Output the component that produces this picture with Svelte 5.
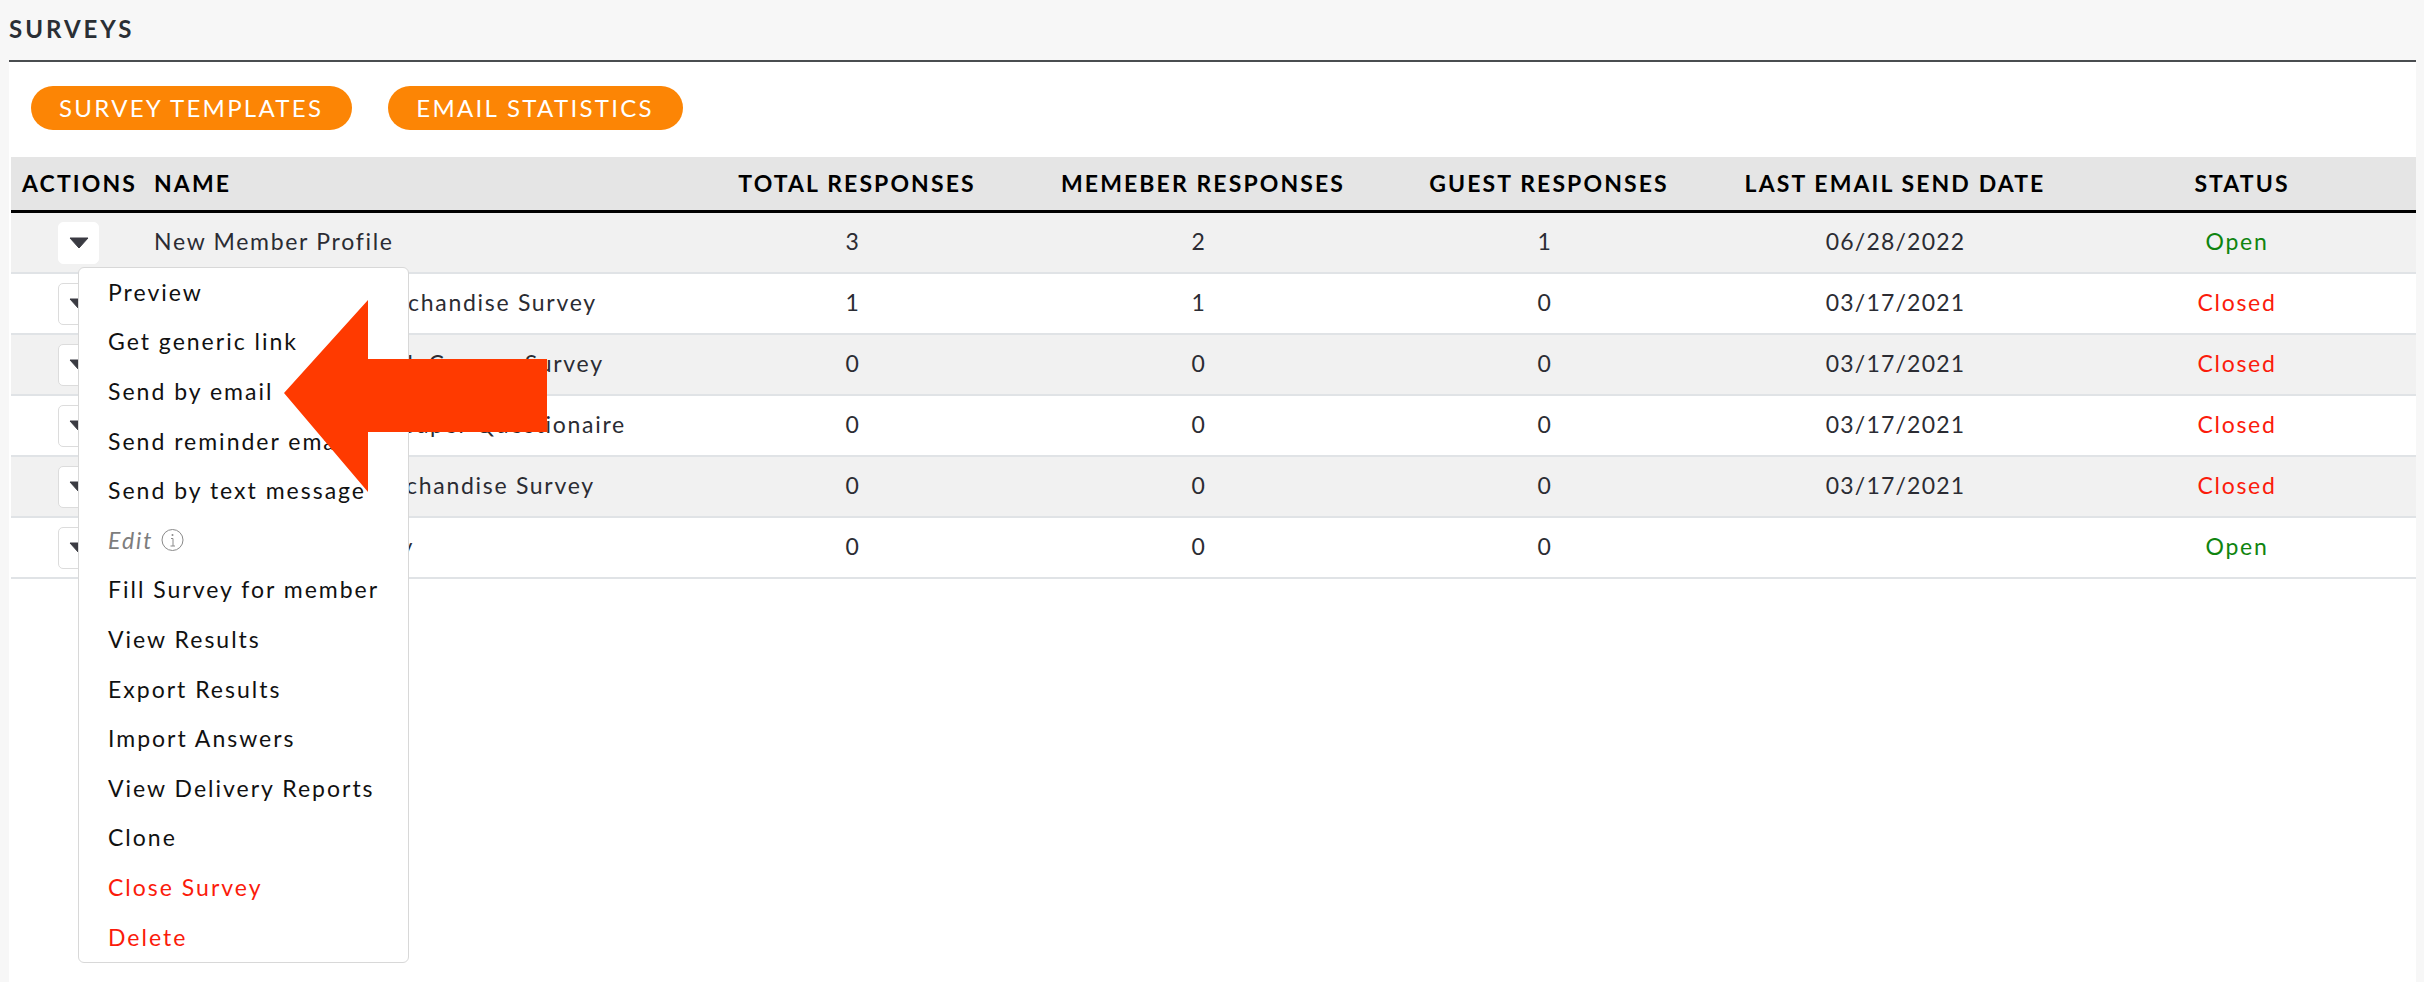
<script>
  const rows = [
    { name: "New Member Profile", total: 3, member: 2, guest: 1, date: "06/28/2022", status: "Open" },
    { name: "Spring & Summer Merchandise Survey", total: 1, member: 1, guest: 0, date: "03/17/2021", status: "Closed" },
    { name: "Lakeview Summer Park Camper Survey", total: 0, member: 0, guest: 0, date: "03/17/2021", status: "Closed" },
    { name: "Big Community Newspaper Questionaire", total: 0, member: 0, guest: 0, date: "03/17/2021", status: "Closed" },
    { name: "Autumn & Spring Merchandise Survey", total: 0, member: 0, guest: 0, date: "03/17/2021", status: "Closed" },
    { name: "Yearly Member Survey", total: 0, member: 0, guest: 0, date: "", status: "Open" }
  ];

  const menu = [
    { label: "Preview" },
    { label: "Get generic link" },
    { label: "Send by email" },
    { label: "Send reminder email" },
    { label: "Send by text message" },
    { label: "Edit", disabled: true },
    { label: "Fill Survey for member" },
    { label: "View Results" },
    { label: "Export Results" },
    { label: "Import Answers" },
    { label: "View Delivery Reports" },
    { label: "Clone" },
    { label: "Close Survey", danger: true },
    { label: "Delete", danger: true }
  ];
</script>

<main>
  <h1>Surveys</h1>
  <section class="panel">
    <div class="buttons">
      <button class="pill">Survey Templates</button>
      <button class="pill">Email Statistics</button>
    </div>

    <div class="table-wrap">
      <table>
        <colgroup>
          <col class="c-actions" />
          <col class="c-name" />
          <col class="c-num" />
          <col class="c-num" />
          <col class="c-num" />
          <col class="c-num" />
          <col />
        </colgroup>
        <thead>
          <tr>
            <th class="left actions-head">Actions</th>
            <th class="left">Name</th>
            <th>Total Responses</th>
            <th>Memeber Responses</th>
            <th>Guest Responses</th>
            <th>Last Email Send Date</th>
            <th class="status-head">Status</th>
          </tr>
        </thead>
        <tbody>
          {#each rows as row, i}
            <tr class:odd={i % 2 === 0}>
              <td class="action-cell">
                <button class="caret" class:first={i === 0} aria-label="Actions">
                  <svg width="20" height="12" viewBox="0 0 20 12">
                    <path d="M1 1h18L10 11z" fill="#3a3b42" stroke="#3a3b42" stroke-width="1" stroke-linejoin="round" />
                  </svg>
                </button>
              </td>
              <td class="name">{row.name}</td>
              <td>{row.total}</td>
              <td>{row.member}</td>
              <td>{row.guest}</td>
              <td class="date">{row.date}</td>
              <td class={row.status === "Open" ? "open" : "closed"}>{row.status}</td>
            </tr>
          {/each}
        </tbody>
      </table>

      <ul class="menu">
        {#each menu as item}
          <li class:danger={item.danger} class:disabled={item.disabled}>
            {item.label}
            {#if item.disabled}
              <svg class="info" width="23" height="24" viewBox="0 0 23 24">
                <circle cx="11.5" cy="12" r="10.5" fill="none" stroke="#8a8a8a" stroke-width="1" />
                <circle cx="11.5" cy="7" r="1" fill="#8a8a8a" />
                <path d="M10 10.5h2v7.5M9.5 18h4.5" fill="none" stroke="#8a8a8a" stroke-width="1" />
              </svg>
            {/if}
          </li>
        {/each}
      </ul>

      <svg class="arrow" width="264" height="192" viewBox="0 0 264 192">
        <path d="M0 93 84 0V59H263V132H84V192z" fill="#ff3a00" />
      </svg>
    </div>
  </section>
</main>

<style>
  :global(body) {
    margin: 0;
    background-color: #f7f7f7;
    font-family: Lato, "Open Sans", sans-serif;
    color: #2b2c33;
  }

  main {
    padding: 0 8px 0 9px;
  }

  h1 {
    margin: 0;
    height: 60px;
    line-height: 58px;
    font-size: 24px;
    font-weight: 700;
    letter-spacing: 3px;
    text-transform: uppercase;
    color: #2a2f35;
    border-bottom: 2px solid #4a4d50;
  }

  .panel {
    background-color: #fff;
    min-height: 920px;
    padding-left: 2px;
  }

  .buttons {
    display: flex;
    gap: 36px;
    padding: 24px 0 27px 20px;
  }

  .pill {
    height: 44px;
    padding: 0 29px 2px 28px;
    border: none;
    border-radius: 22px;
    background-color: #fc8505;
    color: #fff;
    font-family: inherit;
    font-size: 24px;
    letter-spacing: 2.3px;
    text-transform: uppercase;
  }

  .table-wrap {
    position: relative;
  }

  table {
    width: 100%;
    table-layout: fixed;
    border-collapse: separate;
    border-spacing: 0;
    font-size: 23px;
  }

  .c-actions {
    width: 143px;
  }

  .c-name {
    width: 526px;
  }

  .c-num {
    width: 346px;
  }

  th {
    height: 56px;
    padding: 0 0 2px 8px;
    box-sizing: border-box;
    background-color: #e5e5e5;
    border-bottom: 3px solid #000;
    color: #000;
    font-size: 23px;
    font-weight: 700;
    letter-spacing: 2.1px;
    text-transform: uppercase;
    text-align: center;
    white-space: nowrap;
  }

  th.left {
    text-align: left;
    padding-left: 0;
  }

  th.actions-head {
    padding-left: 11px;
  }

  th.status-head {
    padding-left: 4px;
  }

  td {
    height: 61px;
    padding: 0 0 4px;
    box-sizing: border-box;
    border-bottom: 2px solid #e0e3e6;
    text-align: center;
    letter-spacing: 1.7px;
    color: #2b2c33;
    white-space: nowrap;
  }

  td:last-child {
    padding-right: 6px;
  }

  tr.odd td {
    background-color: #f1f1f1;
  }

  td.name {
    text-align: left;
  }

  td.date {
    padding-left: 9px;
    letter-spacing: 1.2px;
  }

  td.open {
    color: #0f840f;
  }

  td.closed {
    color: #fb1b0b;
  }

  td.action-cell {
    text-align: left;
    padding: 0 0 0 47px;
  }

  .caret {
    display: flex;
    align-items: center;
    justify-content: center;
    width: 41px;
    height: 42px;
    padding: 0;
    background-color: #fff;
    border: 1px solid #dcdcdc;
    border-radius: 5px;
  }

  .caret.first {
    border-color: #fff;
  }

  .menu {
    position: absolute;
    left: 67px;
    top: 110px;
    width: 331px;
    margin: 0;
    padding: 0;
    list-style: none;
    background-color: #fff;
    border: 1px solid #d8d8d8;
    border-radius: 6px;
    box-sizing: border-box;
    font-size: 23px;
    letter-spacing: 2px;
    color: #111;
  }

  .menu li {
    display: flex;
    align-items: center;
    gap: 7px;
    height: 49.6px;
    padding: 0 0 2px 29px;
    box-sizing: border-box;
  }

  .menu li.danger {
    color: #fb1b0b;
  }

  .menu li.disabled {
    color: #7d7d7d;
    font-style: italic;
  }

  .arrow {
    position: absolute;
    left: 273px;
    top: 143px;
  }
</style>
